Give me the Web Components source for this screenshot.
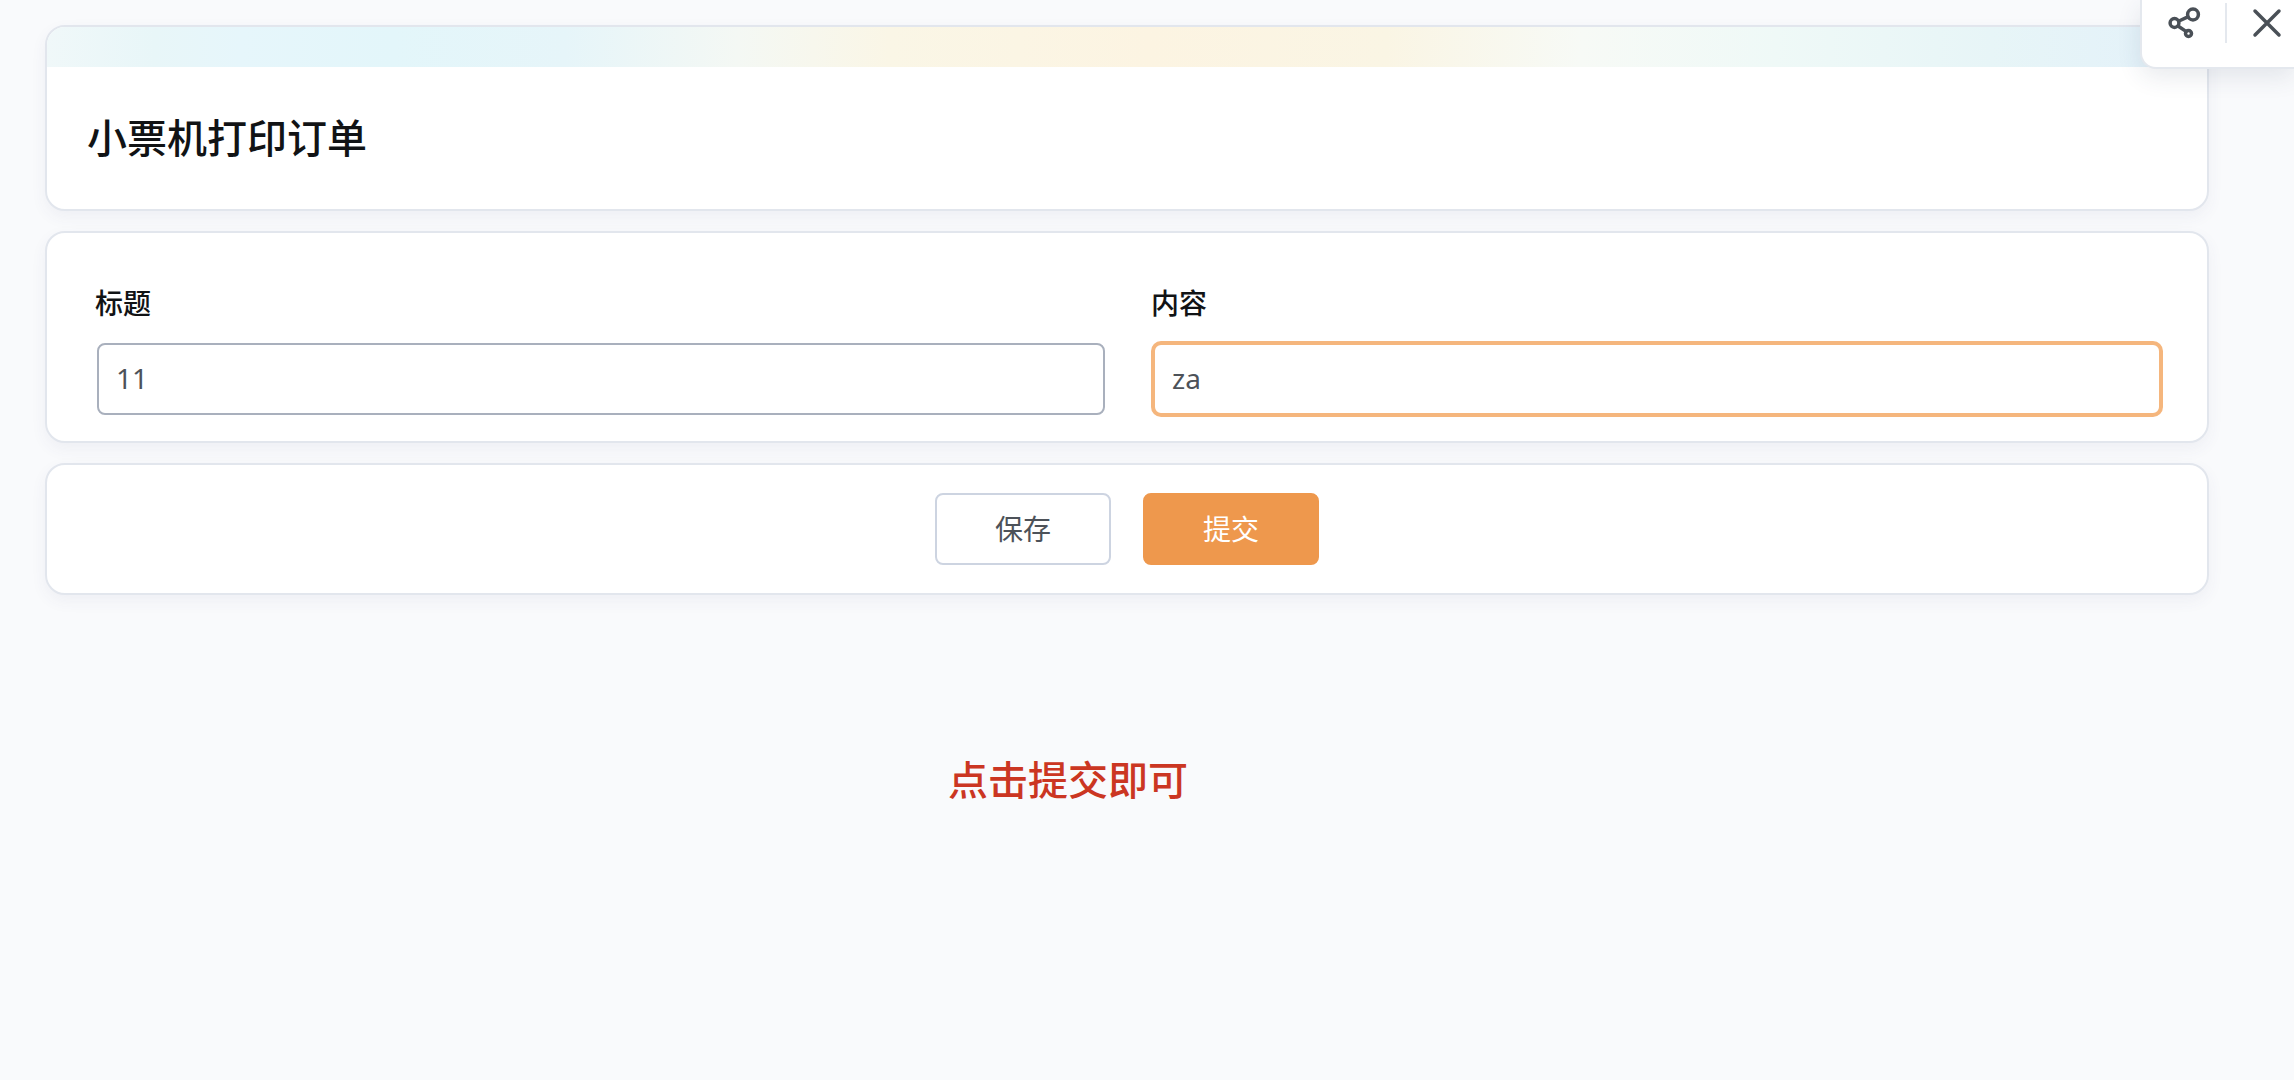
<!DOCTYPE html>
<html lang="zh-CN">
<head>
<meta charset="utf-8">
<title>小票机打印订单</title>
<style>
  html { background: #f9fafc; }
  body { margin: 0; font-family: "Noto Sans", "Noto Sans CJK SC", sans-serif; color: #111315; }
</style>
</head>
<body>
<order-page></order-page>
<script>
const define = (name, html, setup) => {
  const tpl = document.createElement('template');
  tpl.innerHTML = html;
  customElements.define(name, class extends HTMLElement {
    constructor() {
      super();
      this.attachShadow({ mode: 'open' }).append(tpl.content.cloneNode(true));
    }
    connectedCallback() { if (setup) setup(this, this.shadowRoot); }
  });
};

define('ui-card', `
<style>
  :host { display: block; box-sizing: border-box; background: #fff; border: 2px solid #e2e6ed;
    border-radius: 20px; overflow: hidden; box-shadow: 0 6px 16px rgba(60, 70, 120, .06); }
</style>
<slot></slot>`);

define('card-banner', `
<style>
  :host { display: block; height: 40px; background: linear-gradient(92deg,
    #f0f8f9 0%, #e8f6f8 5%, #e6f6fb 9%, #e3f6fa 16%, #e6f5f9 24%, #f4f8f4 32%,
    #faf6e6 39%, #fcf4e2 51%, #faf5e4 62%, #f7faf6 71%, #eff9f7 80%, #e7f5f7 90%, #e4f2f9 97%, #e6f2f9 100%); }
</style>`);

define('form-field', `
<style>
  :host { display: flex; flex-direction: column; gap: 20px; flex: 1; min-width: 0; }
  label { font-size: 28px; line-height: 40px; font-weight: 500; margin-left: -2px; }
  input { box-sizing: border-box; width: 100%; height: 72px; padding: 0 17px 2px; margin: 0;
    border: 2px solid #a9b0bd; border-radius: 8px; background: #fff; outline: none;
    font: inherit; font-size: 28px; color: #4d5259; }
  :host([active]) input { border-color: #f5b67d; box-shadow: 0 0 0 2px #f5b67d; }
</style>
<label for="field"></label><input id="field" type="text">`, (host, root) => {
  root.querySelector('label').textContent = host.getAttribute('label');
  root.querySelector('input').value = host.getAttribute('value');
});

define('ui-button', `
<style>
  :host { display: block; }
  button { box-sizing: border-box; width: 176px; height: 72px; padding: 0 0 2px; margin: 0; border: 2px solid #cdd4e1;
    border-radius: 8px; background: #fff; color: #4d5259; font: inherit; font-size: 28px; }
  :host([primary]) button { background: #ee984d; border-color: #ee984d; color: #fff; }
</style>
<button type="button"><slot></slot></button>`);

define('page-tools', `
<style>
  :host { position: fixed; top: 0; right: 0; display: flex; box-sizing: border-box; align-items: flex-start;
    width: 154px; height: 69px; background: #fff; border: solid #e4e8ee; border-width: 0 0 2px 2px;
    border-bottom-left-radius: 16px; box-shadow: 0 8px 24px rgba(50, 60, 90, .11); }
  button { flex: 1; height: 46px; padding: 0 0 0 13px; margin: 0; border: 0; background: none; }
  svg { display: block; margin: auto; fill: none; stroke: #4a5057; stroke-width: 3.5; stroke-linecap: round; }
  i { width: 2px; height: 40px; margin-top: 3px; background: #e4e8ee; }
  .share { flex: 0 0 83px; padding: 0; }
</style>
<button class="share" type="button" aria-label="分享"><svg width="34" height="34" viewBox="0 0 34 34">
  <circle cx="7.5" cy="17" r="4.4"/><circle cx="26" cy="8.5" r="5.4"/><circle cx="21.5" cy="27.5" r="3"/>
  <path d="M12 15 20.8 10.8M11 20 19 25.4"/></svg></button>
<i></i>
<button type="button" aria-label="关闭"><svg width="34" height="34" viewBox="0 0 34 34"><path d="M5 5 29 29M29 5 5 29"/></svg></button>`);

define('order-page', `
<style>
  :host { display: block; padding: 25px 85px 0 45px; }
  main { display: flex; flex-direction: column; gap: 20px; }
  h1 { margin: 0; padding: 41px 40px 41px; font-size: 40px; line-height: 60px; font-weight: 500; }
  .fields { display: flex; gap: 48px; padding: 50px 46px 26px 50px; }
  .actions { display: flex; justify-content: center; gap: 32px; padding: 28px; }
  p { margin: 155px 0 0; padding-left: 903px; font-size: 40px; line-height: 60px; font-weight: 500; color: #cb3622; }
</style>
<main>
  <ui-card><card-banner></card-banner><h1>小票机打印订单</h1></ui-card>
  <ui-card><div class="fields">
    <form-field label="标题" value="11"></form-field>
    <form-field label="内容" value="za" active></form-field>
  </div></ui-card>
  <ui-card><div class="actions"><ui-button>保存</ui-button><ui-button primary>提交</ui-button></div></ui-card>
</main>
<p>点击提交即可</p>
<page-tools></page-tools>`);
</script>
</body>
</html>
